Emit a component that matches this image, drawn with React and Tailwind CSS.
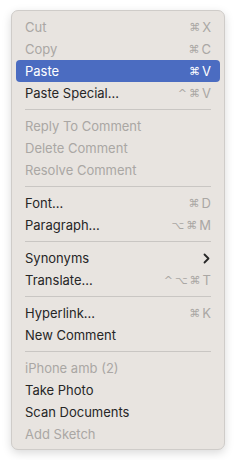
import React from "react";

const groups = [
  [
    { label: "Cut", sc: ["⌘", "X"], disabled: true },
    { label: "Copy", sc: ["⌘", "C"], disabled: true },
    { label: "Paste", sc: ["⌘", "V"], active: true },
    { label: "Paste Special...", sc: ["^", "⌘", "V"] },
  ],
  [
    { label: "Reply To Comment", disabled: true },
    { label: "Delete Comment", disabled: true },
    { label: "Resolve Comment", disabled: true },
  ],
  [
    { label: "Font...", sc: ["⌘", "D"] },
    { label: "Paragraph...", sc: ["⌥", "⌘", "M"] },
  ],
  [
    { label: "Synonyms", submenu: true },
    { label: "Translate...", sc: ["^", "⌥", "⌘", "T"] },
  ],
  [
    { label: "Hyperlink...", sc: ["⌘", "K"] },
    { label: "New Comment" },
  ],
  [
    { label: "iPhone amb (2)", disabled: true },
    { label: "Take Photo" },
    { label: "Scan Documents" },
    { label: "Add Sketch", disabled: true },
  ],
];

function Shortcut({ keys, active }) {
  return (
    <span
      className={
        "flex items-center gap-[2px] text-[13px] " +
        (active ? "text-white" : "text-[#aaa7a4]")
      }
    >
      {keys.map((k, i) => (
        <span
          key={i}
          className={
            k === "⌘" || k === "⌥" || k === "^"
              ? "font-['DejaVu_Sans',sans-serif] text-[11px]"
              : ""
          }
        >
          {k}
        </span>
      ))}
    </span>
  );
}

function Row({ item }) {
  const base =
    "flex h-[22px] items-center justify-between rounded-[4px] px-[9px] text-[13px] leading-none";
  const color = item.active
    ? "bg-[#4b6cc1] text-white"
    : item.disabled
    ? "text-[#aaa7a4]"
    : "text-[#262626]";
  return (
    <div className={base + " " + color}>
      <span>{item.label}</span>
      {item.sc && <Shortcut keys={item.sc} active={item.active} />}
      {item.submenu && (
        <svg width="7" height="11" viewBox="0 0 7 11" className="mr-[1px]">
          <path
            d="M1.5 1.5 L5.5 5.5 L1.5 9.5"
            fill="none"
            stroke="#262626"
            strokeWidth="1.8"
            strokeLinecap="round"
            strokeLinejoin="round"
          />
        </svg>
      )}
    </div>
  );
}

export default function App() {
  return (
    <div className="h-[460px] w-[243px] bg-white pl-[11px] pt-[10px] font-['Inter',sans-serif]">
      <div className="w-[214px] rounded-[7px] border border-[#cfccc9] bg-[#e8e4e0] px-[4px] pb-[4px] pt-[5px] shadow-[0_3px_10px_rgba(0,0,0,0.15)]">
        {groups.map((g, gi) => (
          <div key={gi}>
            {gi > 0 && (
              <div className="flex h-[11px] items-center px-[9px]">
                <div className="h-px w-full bg-[#c9c6c3]" />
              </div>
            )}
            {g.map((item, i) => (
              <Row key={i} item={item} />
            ))}
          </div>
        ))}
      </div>
    </div>
  );
}
